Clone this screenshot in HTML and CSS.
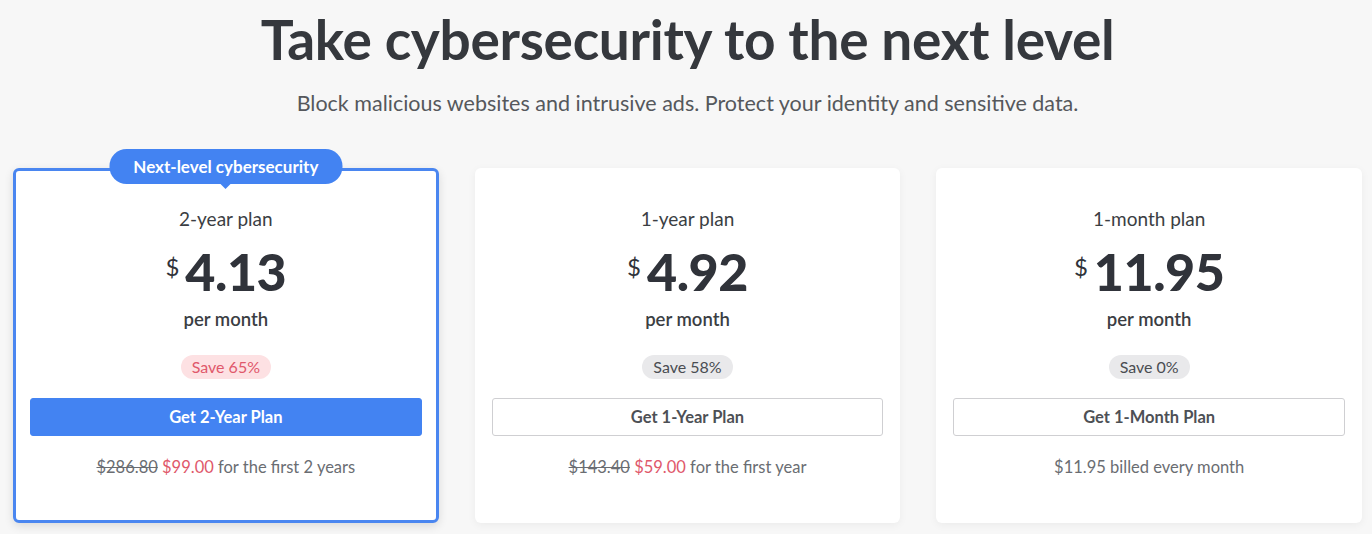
FILE: index.html
```html
<!DOCTYPE html>
<html lang="en">
<head>
<meta charset="utf-8">
<title>Pricing</title>
<link rel="stylesheet" href="styles.css">
</head>
<body>
<main class="page">
  <h1 class="title">Take cybersecurity to the next level</h1>
  <p class="subtitle">Block malicious websites and intrusive ads. Protect your identity and sensitive data.</p>
  <section class="plans">
    <article class="card card-featured">
      <div class="ribbon">Next-level cybersecurity</div>
      <div class="plan-name">2-year plan</div>
      <div class="price"><span class="cur">$</span><span class="amount">4.13</span></div>
      <div class="per">per month</div>
      <div class="save save-hot">Save 65%</div>
      <button class="btn btn-primary">Get 2-Year Plan</button>
      <div class="note"><s class="old">$286.80</s> <span class="new">$99.00</span> for the first 2 years</div>
    </article>
    <article class="card">
      <div class="plan-name">1-year plan</div>
      <div class="price"><span class="cur">$</span><span class="amount">4.92</span></div>
      <div class="per">per month</div>
      <div class="save">Save 58%</div>
      <button class="btn">Get 1-Year Plan</button>
      <div class="note"><s class="old">$143.40</s> <span class="new">$59.00</span> for the first year</div>
    </article>
    <article class="card">
      <div class="plan-name">1-month plan</div>
      <div class="price"><span class="cur">$</span><span class="amount">11.95</span></div>
      <div class="per">per month</div>
      <div class="save">Save 0%</div>
      <button class="btn">Get 1-Month Plan</button>
      <div class="note">$11.95 billed every month</div>
    </article>
  </section>
</main>
</body>
</html>
```
FILE: styles.css
```css
* { box-sizing: border-box; }
html, body { margin: 0; padding: 0; }
body {
  background: #f7f7f7;
  font-family: Lato, "Noto Sans", sans-serif;
  color: #3b3e43;
  width: 1372px;
  height: 534px;
  overflow: hidden;
}
.page { padding: 0 10px 0 13px; }
.title {
  margin: 0;
  padding-top: 6px;
  text-align: center;
  font-size: 55px;
  line-height: 66px;
  font-weight: 700;
  color: #35383d;
  letter-spacing: -0.3px;
}
.subtitle {
  margin: 18px 0 0;
  text-align: center;
  font-size: 21.5px;
  line-height: 26px;
  color: #55585c;
  font-weight: 400;
}
.plans {
  margin-top: 52px;
  display: grid;
  grid-template-columns: repeat(3, 1fr);
  gap: 36px;
}
.card {
  position: relative;
  background: #fff;
  border: 3px solid transparent;
  border-radius: 6px;
  box-shadow: 0 2px 8px rgba(0,0,0,0.05);
  padding: 36px 14px 40px;
  display: flex;
  flex-direction: column;
  align-items: center;
  height: 355px;
}
.card-featured {
  border-color: #4a86f0;
  box-shadow: 0 3px 10px rgba(0,0,0,0.12);
}
.ribbon {
  position: absolute;
  top: -22px;
  left: 50%;
  transform: translateX(-50%);
  background: #4383f2;
  color: #fff;
  font-weight: 700;
  font-size: 17px;
  line-height: 35px;
  padding: 0 24px;
  border-radius: 17px;
  white-space: nowrap;
}
.ribbon::after {
  content: "";
  position: absolute;
  left: 50%;
  bottom: -5px;
  margin-left: -6px;
  border-left: 6px solid transparent;
  border-right: 6px solid transparent;
  border-top: 6px solid #4383f2;
}
.plan-name {
  font-size: 19px;
  line-height: 24px;
  color: #3b3e43;
}
.price {
  display: flex;
  align-items: flex-start;
  margin-top: 17px;
  color: #30333a;
}
.cur {
  font-size: 24px;
  line-height: 28px;
  margin-right: 6px;
  margin-top: 5px;
}
.amount {
  font-size: 52px;
  line-height: 46px;
  font-weight: 900;
  letter-spacing: -0.5px;
}
.per {
  margin-top: 13px;
  font-size: 18.5px;
  line-height: 24px;
  font-weight: 600;
  color: #3b3e43;
}
.save {
  margin-top: 24px;
  background: #e9e9eb;
  color: #4a4d52;
  font-size: 16px;
  line-height: 24px;
  padding: 0 11px;
  border-radius: 12px;
}
.save-hot {
  background: #fde1e3;
  color: #e0586b;
}
.btn {
  margin-top: 19px;
  width: 100%;
  height: 38px;
  border: 1px solid #cfcfd2;
  background: #fff;
  border-radius: 3px;
  font-family: inherit;
  font-size: 16.5px;
  font-weight: 700;
  color: #4d5055;
}
.btn-primary {
  background: #4383f2;
  border-color: #4383f2;
  color: #fff;
}
.note {
  margin-top: 20px;
  font-size: 16.5px;
  line-height: 22px;
  color: #6a6d72;
}
.old { color: #6a6d72; }
.new { color: #e0586b; }
```
